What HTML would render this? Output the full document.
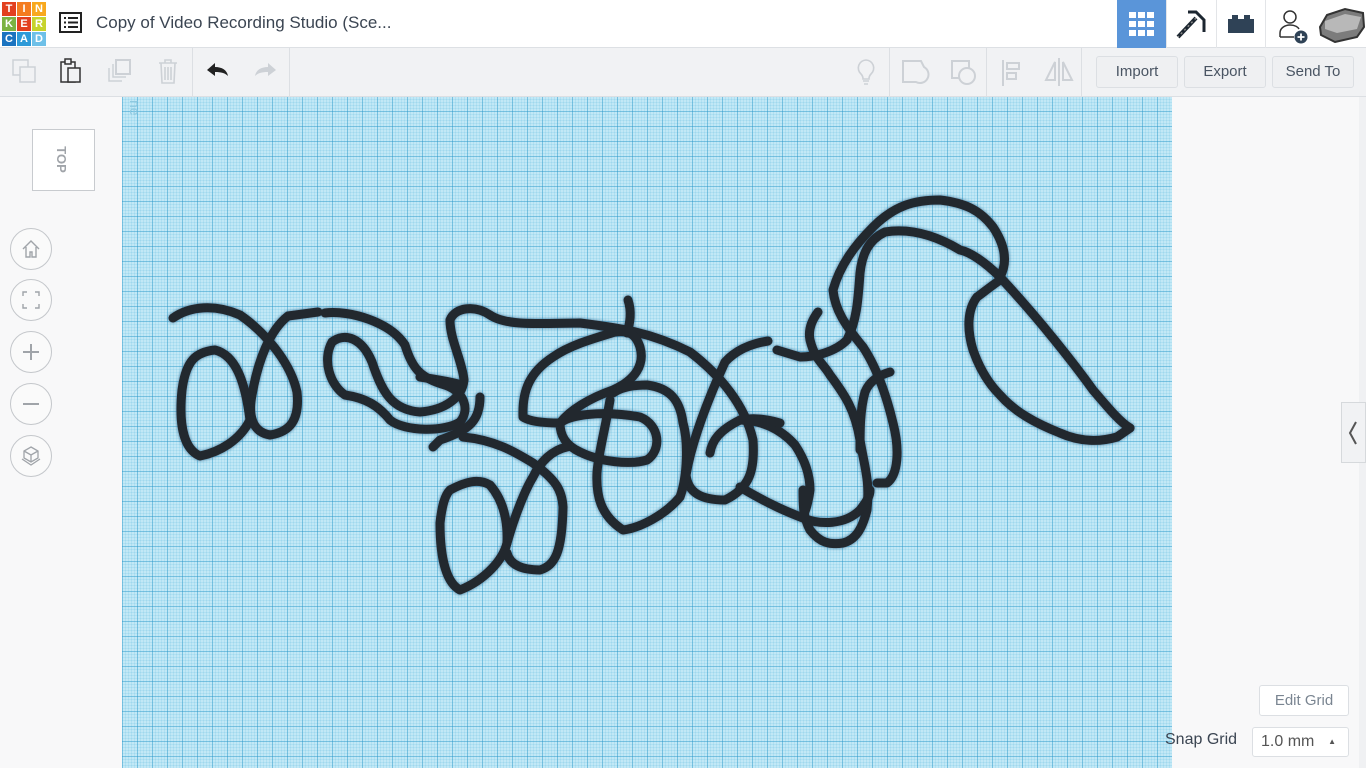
<!DOCTYPE html>
<html><head><meta charset="utf-8"><style>
*{margin:0;padding:0;box-sizing:border-box}
body{width:1366px;height:768px;overflow:hidden;background:#f8f8f9;font-family:"Liberation Sans",sans-serif;position:relative}
.hdr{position:absolute;left:0;top:0;width:1366px;height:48px;background:#fff;border-bottom:1px solid #dde0e4}
.tb{position:absolute;left:0;top:48px;width:1366px;height:49px;background:#f1f2f4;border-bottom:1px solid #dcdfe3}
.logo{position:absolute;left:2px;top:2px;width:44px;height:44px;display:grid;grid-template-columns:repeat(3,14px);grid-gap:1px}
.logo div{color:#fff;font-size:11px;font-weight:bold;text-align:center;line-height:14px}
.title{position:absolute;left:96px;top:13px;font-size:17px;color:#3b4552}
.grid{position:absolute;left:122px;top:97px;width:1050px;height:671px;background-color:#c2e8f6;
background-image:linear-gradient(90deg,rgba(40,150,200,.42) 1px,transparent 1px),linear-gradient(0deg,rgba(40,150,200,.42) 1px,transparent 1px),linear-gradient(90deg,rgba(80,180,220,.16) 1px,transparent 1px),linear-gradient(0deg,rgba(80,180,220,.16) 1px,transparent 1px);
background-size:15px 15px,15px 15px,3px 3px,3px 3px}
.btn{position:absolute;top:56px;height:32px;border:1px solid #dcdfe3;border-radius:3px;background:#eff0f2;color:#4a5563;font-size:15px;text-align:center;line-height:30px}
.circ{position:absolute;left:10px;width:42px;height:42px;border:1px solid #c4c7cb;border-radius:50%;background:#fafafa}
.sep{position:absolute;top:48px;width:1px;height:49px;background:#dcdfe3}
</style></head><body>
<div class="hdr">
<div class="logo">
<div style="background:#e2401f">T</div><div style="background:#f47c20">I</div><div style="background:#f8a81d">N</div>
<div style="background:#7cb342">K</div><div style="background:#e2401f">E</div><div style="background:#c6d32c">R</div>
<div style="background:#1a73c0">C</div><div style="background:#2e9ad8">A</div><div style="background:#6ec0e8">D</div>
</div>
<svg style="position:absolute;left:59px;top:12px" width="24" height="22"><rect x="1" y="1" width="21" height="19" fill="none" stroke="#222" stroke-width="2"/><g fill="#222"><rect x="5" y="5" width="2" height="2"/><rect x="9" y="5" width="10" height="2"/><rect x="5" y="9.5" width="2" height="2"/><rect x="9" y="9.5" width="10" height="2"/><rect x="5" y="14" width="2" height="2"/><rect x="9" y="14" width="10" height="2"/></g></svg>
<div class="title">Copy of Video Recording Studio (Sce...</div>
<div style="position:absolute;left:1117px;top:0;width:49px;height:48px;background:#5a95d9"></div>
<svg style="position:absolute;left:1129px;top:12px" width="25" height="24"><g fill="#fff"><rect x="0" y="0" width="7" height="6"/><rect x="9" y="0" width="7" height="6"/><rect x="18" y="0" width="7" height="6"/><rect x="0" y="9" width="7" height="6"/><rect x="9" y="9" width="7" height="6"/><rect x="18" y="9" width="7" height="6"/><rect x="0" y="18" width="7" height="6"/><rect x="9" y="18" width="7" height="6"/><rect x="18" y="18" width="7" height="6"/></g></svg>
<div style="position:absolute;left:1166px;top:0;width:1px;height:48px;background:#e3e5e8"></div>
<svg style="position:absolute;left:1174px;top:8px" width="34" height="32"><path d="M14 4 L22 4 L30 12 L30 24" fill="none" stroke="#1c2630" stroke-width="3"/><path d="M22 10 L4 29" stroke="#1c2630" stroke-width="4"/><path d="M22 10 L4 29" stroke="#888" stroke-width="1.5" stroke-dasharray="2 3"/></svg>
<div style="position:absolute;left:1216px;top:0;width:1px;height:48px;background:#e3e5e8"></div>
<svg style="position:absolute;left:1227px;top:14px" width="28" height="20"><path d="M1 5h4v-4h6v4h6v-4h6v4h4v14h-26z" fill="#2f4256"/></svg>
<div style="position:absolute;left:1265px;top:0;width:1px;height:48px;background:#e3e5e8"></div>
<svg style="position:absolute;left:1277px;top:9px" width="36" height="36"><circle cx="13" cy="8" r="6" fill="none" stroke="#333" stroke-width="1.5"/><path d="M3 28v-4c0-5 5-8 10-8s8 2 9 4" fill="none" stroke="#333" stroke-width="1.5"/><path d="M3 28h14" stroke="#333" stroke-width="1.5"/><circle cx="24" cy="28" r="6.5" fill="#2f4256"/><path d="M24 24.5v7M20.5 28h7" stroke="#fff" stroke-width="1.8"/></svg>
<svg style="position:absolute;left:1317px;top:5px" width="49" height="38"><path d="M3 22 L10 10 L28 4 L46 8 L47 22 L40 32 L18 37 L4 30z" fill="#7c7c7c" stroke="#333" stroke-width="2"/><path d="M8 16 L28 9 L44 12 L40 24 L20 28 L8 24z" fill="#b8b8b8"/></svg>
</div>
<div class="tb">
<svg style="position:absolute;left:11px;top:10px" width="28" height="28"><rect x="2" y="2" width="15" height="15" fill="none" stroke="#cdd1d6" stroke-width="1.5"/><rect x="9" y="9" width="15" height="15" fill="#f1f2f4" stroke="#cdd1d6" stroke-width="1.5"/></svg>
<svg style="position:absolute;left:59px;top:9px" width="24" height="28"><rect x="2" y="5" width="14" height="20" fill="none" stroke="#333" stroke-width="1.5"/><rect x="6" y="2" width="6" height="5" fill="#f1f2f4" stroke="#333" stroke-width="1.5"/><rect x="9" y="11" width="12" height="14" fill="#f1f2f4" stroke="#333" stroke-width="1.5"/></svg>
<svg style="position:absolute;left:106px;top:10px" width="28" height="28"><rect x="10" y="2" width="14" height="14" fill="none" stroke="#cdd1d6" stroke-width="2"/><path d="M7 6v13h13M3 10v13h13" fill="none" stroke="#cdd1d6" stroke-width="1.5"/></svg>
<svg style="position:absolute;left:157px;top:9px" width="22" height="28"><path d="M2 6h18M8 6V3h6v3M4 6l1 20h12l1-20M8 10v13M11 10v13M14 10v13" fill="none" stroke="#cdd1d6" stroke-width="1.6"/></svg>
<div class="sep" style="left:192px;top:0"></div>
<svg style="position:absolute;left:205px;top:13px" width="26" height="20"><path d="M2 9 L10 2 L10 6 C17 6 22 9 23 15 C20 12 16 11 10 11 L10 15z" fill="#222"/></svg>
<svg style="position:absolute;left:252px;top:13px" width="26" height="20"><path d="M24 9 L16 2 L16 6 C9 6 4 9 3 15 C6 12 10 11 16 11 L16 15z" fill="#cdd1d6"/></svg>
<div class="sep" style="left:289px;top:0"></div>
<svg style="position:absolute;left:853px;top:10px" width="26" height="30"><path d="M13 2a8 8 0 0 0-5 14c1 1 2 3 2 5h6c0-2 1-4 2-5a8 8 0 0 0-5-14zM10 23h6M11 26h4" fill="none" stroke="#cdd1d6" stroke-width="1.6"/></svg>
<div class="sep" style="left:889px;top:0"></div>
<svg style="position:absolute;left:900px;top:10px" width="30" height="30"><path d="M3 3h18l3 6a8 8 0 0 1-8 15h-13z" fill="none" stroke="#cdd1d6" stroke-width="2"/></svg>
<svg style="position:absolute;left:950px;top:10px" width="30" height="30"><rect x="2" y="3" width="17" height="17" fill="none" stroke="#cdd1d6" stroke-width="2"/><circle cx="17" cy="18" r="8" fill="#f1f2f4" stroke="#cdd1d6" stroke-width="2"/></svg>
<div class="sep" style="left:986px;top:0"></div>
<svg style="position:absolute;left:1000px;top:10px" width="24" height="30"><path d="M3 2v26" stroke="#cdd1d6" stroke-width="2"/><rect x="7" y="5" width="12" height="6" fill="none" stroke="#cdd1d6" stroke-width="2"/><rect x="7" y="15" width="9" height="6" fill="none" stroke="#cdd1d6" stroke-width="2"/></svg>
<svg style="position:absolute;left:1042px;top:8px" width="34" height="32"><path d="M17 2v28" stroke="#cdd1d6" stroke-width="2"/><path d="M13 6 L4 24 H13z M21 6 L30 24 H21z" fill="none" stroke="#cdd1d6" stroke-width="2"/></svg>
<div class="sep" style="left:1081px;top:0"></div>
</div>
<div class="btn" style="left:1096px;width:82px">Import</div>
<div class="btn" style="left:1184px;width:82px">Export</div>
<div class="btn" style="left:1272px;width:82px">Send To</div>

<div class="grid"></div>
<div style="position:absolute;top:100px;color:#8fc9e0;font-size:14px;transform:rotate(90deg);transform-origin:left top;left:143px">ne</div>

<svg style="position:absolute;left:0;top:0" width="1366" height="768">
<g fill="none" stroke="#22282e" stroke-width="9" stroke-linecap="round" stroke-linejoin="round" style="filter:drop-shadow(0 0 1.5px #3a6f95)">
<path d="M173,318 C190,306 215,304 240,315 C262,330 290,360 297,392 C300,420 290,432 270,435 C252,432 248,415 252,395 C258,360 270,330 288,316 L318,312"/>
<path d="M250,420 C240,440 220,452 200,456 C186,450 178,430 182,390 C186,360 196,352 215,350 C235,355 245,380 250,420"/>
<path d="M325,313 C350,310 390,322 405,345 C412,368 420,378 445,385 C465,392 470,410 460,422 C445,432 405,432 390,420 C378,405 365,398 345,395 C330,385 322,360 332,342 C345,332 362,338 372,362 C382,392 392,410 420,412 C445,410 462,398 464,380 C462,360 450,340 450,320 C455,307 475,305 490,315 C505,325 530,324 580,323 C620,328 650,332 690,352 C720,375 745,405 753,440 C755,470 750,488 725,500 C700,500 688,492 686,475 C692,440 710,395 725,362 C738,348 755,343 768,341"/>
<path d="M420,377 C440,380 455,383 462,385"/>
<path d="M480,397 C480,420 470,430 440,440 L433,447"/>
<path d="M628,300 C632,312 630,323 627,333"/>
<path d="M560,423 C570,415 600,410 640,417 C660,425 662,450 647,460 C630,465 600,462 580,452 C565,445 560,435 560,423 C570,410 590,398 613,390 C635,380 645,365 640,347 C636,335 630,330 615,332 C595,338 570,345 553,357 C530,372 522,390 523,417 C530,422 545,423 560,423"/>
<path d="M610,400 C605,430 598,455 597,473 C596,495 600,515 623,530 C640,528 665,515 680,497 C688,475 688,440 683,423 C680,400 670,388 647,385 C630,385 620,388 613,393"/>
<path d="M450,490 C465,482 478,478 490,485 C503,500 508,520 507,543 C503,560 485,580 460,590 C447,583 440,560 440,523 C442,505 445,495 450,490"/>
<path d="M507,553 C510,565 522,570 540,570 C555,565 562,553 563,507 C562,490 556,480 533,463 C515,452 495,440 463,437"/>
<path d="M507,543 C515,515 525,490 533,477 C540,462 552,450 567,447"/>
<path d="M1130,428 C1120,422 1110,410 1093,390 C1075,365 1040,320 1000,277 C985,262 970,252 960,250 C935,235 910,228 885,232 C868,240 862,255 860,273 C858,300 857,320 847,340 C835,352 815,357 800,357 L777,350"/>
<path d="M1000,277 C1008,262 1005,245 993,227 C980,210 965,203 940,200 C915,200 895,205 873,227 C855,245 840,265 833,290 C835,310 845,325 863,347 C875,365 885,390 893,423 C900,450 898,475 887,483 L877,483"/>
<path d="M1000,280 C990,287 980,295 977,297 C967,310 967,330 973,350 C980,370 990,385 1000,395 C1015,412 1035,423 1060,433 C1080,442 1100,442 1117,437 L1130,428"/>
<path d="M818,312 C812,320 808,330 810,340 C815,360 823,363 830,375 C845,395 855,410 860,440 C865,470 870,480 867,510 C862,530 855,540 843,543 C830,545 820,543 810,530 C803,517 803,505 803,490"/>
<path d="M890,372 C880,375 870,380 865,392 C860,410 860,430 860,450"/>
<path d="M740,420 C760,420 780,428 795,445 C805,460 810,475 810,490 C808,505 805,512 803,517"/>
<path d="M740,487 C770,505 790,513 803,518 C820,525 845,525 860,510 C868,500 870,495 870,490"/>
<path d="M710,453 C712,440 720,430 740,420 C755,417 770,420 780,423"/>
</g>
</svg>

<div style="position:absolute;left:32px;top:129px;width:63px;height:62px;border:1px solid #c8cbcf;background:#fff"></div>
<div style="position:absolute;left:48px;top:152px;font-size:13px;font-weight:bold;color:#a0a4a9;transform:rotate(90deg)">TOP</div>
<div class="circ" style="top:228px"></div>
<svg style="position:absolute;left:20px;top:238px" width="22" height="22"><path d="M3 11 L11 3 L19 11 M6 9v10h4v-5h2v5h4V9" fill="none" stroke="#a0a4a9" stroke-width="1.4"/></svg>
<div class="circ" style="top:279px"></div>
<svg style="position:absolute;left:21px;top:290px" width="20" height="20"><path d="M2 6V2h4M14 2h4v4M18 14v4h-4M6 18H2v-4" fill="none" stroke="#a0a4a9" stroke-width="1.4"/></svg>
<div class="circ" style="top:331px"></div>
<svg style="position:absolute;left:21px;top:342px" width="20" height="20"><path d="M10 2v16M2 10h16" stroke="#a0a4a9" stroke-width="2"/></svg>
<div class="circ" style="top:383px"></div>
<svg style="position:absolute;left:21px;top:394px" width="20" height="20"><path d="M2 10h16" stroke="#a0a4a9" stroke-width="2"/></svg>
<div class="circ" style="top:435px"></div>
<svg style="position:absolute;left:20px;top:445px" width="22" height="22"><path d="M11 2 L18 6 V13 L11 17 L4 13 V6z M4 6 L11 10 L18 6 M11 10V17 M2 14 L11 20 L20 14" fill="none" stroke="#a0a4a9" stroke-width="1.3"/></svg>

<div style="position:absolute;left:1359px;top:97px;width:7px;height:671px;background:#f0f1f3"></div>
<div style="position:absolute;left:1341px;top:402px;width:25px;height:61px;border:1px solid #d6d9dc;background:#f1f2f4"></div>
<svg style="position:absolute;left:1347px;top:420px" width="12" height="26"><path d="M9 2 L3 13 L9 24" fill="none" stroke="#555" stroke-width="2"/></svg>

<div style="position:absolute;left:1259px;top:685px;width:90px;height:31px;border:1px solid #dcdfe3;border-radius:3px;background:#fff;color:#7a8591;font-size:15px;text-align:center;line-height:29px">Edit Grid</div>
<div style="position:absolute;left:1165px;top:731px;font-size:16px;color:#3b4552">Snap Grid</div>
<div style="position:absolute;left:1252px;top:727px;width:97px;height:30px;border:1px solid #dcdfe3;border-radius:3px;background:#fff;color:#555;font-size:16px;line-height:28px;padding-left:8px">1.0 mm<span style="position:absolute;right:12px;top:0;font-size:8px">▲</span></div>
</body></html>
